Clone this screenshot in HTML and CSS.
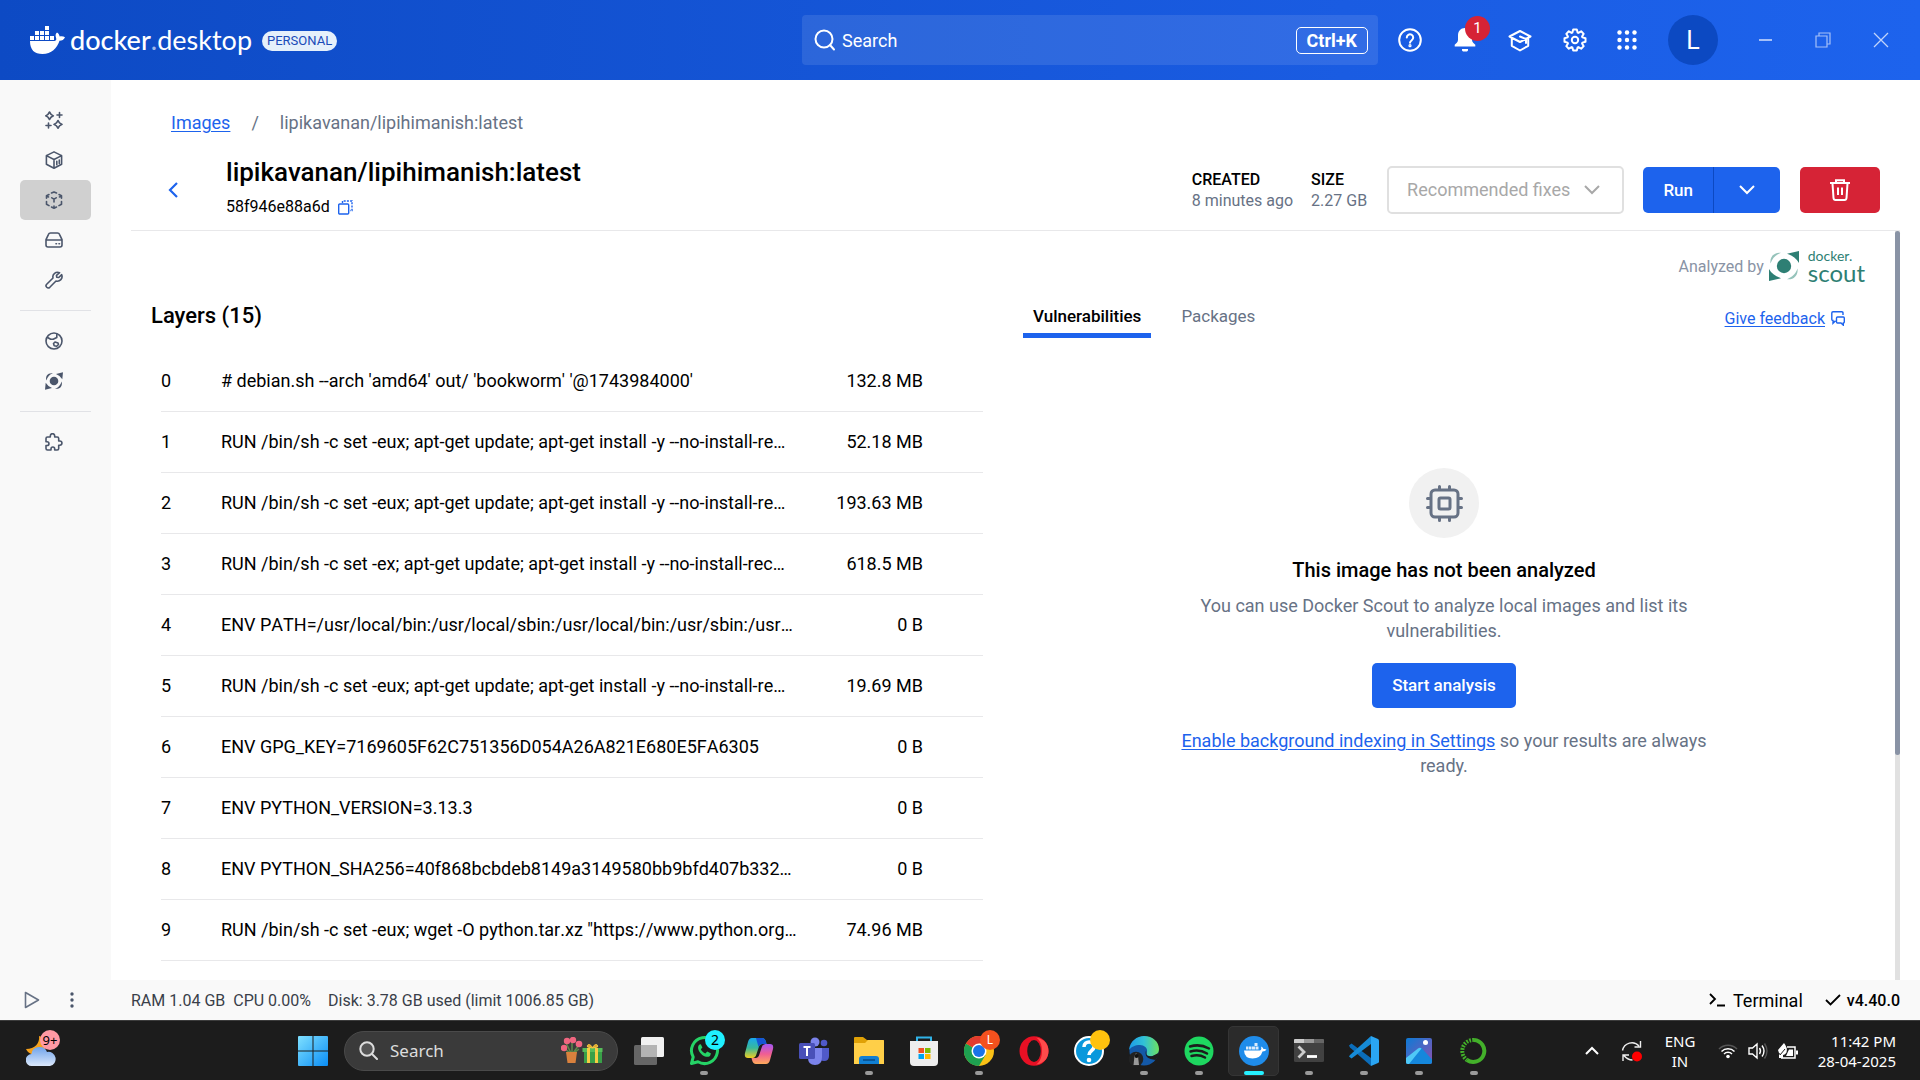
FILE: index.html
```html
<!DOCTYPE html>
<html lang="en">
<head>
    <meta charset="UTF-8">
    <meta name="viewport" content="width=device-width, initial-scale=1.0">
    <title>Docker Desktop</title>
    <link rel="stylesheet" href="styles.css">
</head>
<body>
    <header class="topbar">
        <div class="brand">
            <svg class="whale" viewBox="0 0 35 28" fill="#fff"><path d="M15 0h4v4h-4zM5 5h4v4H5zM10 5h4v4h-4zM15 5h4v4h-4zM0 10h4v4H0zM5 10h4v4H5zM10 10h4v4h-4zM15 10h4v4h-4zM20 10h4v4h-4z"/><path d="M0 15H24.500C27 14.500 26.300 12.500 25.700 10.500C25.300 8.600 26 7.300 27 6.500C28.600 7.500 29.400 9 29.700 10.600C31.400 10 33.600 10.400 35 11.200C34 13.500 32 14.800 29.500 14.800C27 22.500 21.500 28 12.500 28C4.500 28 0 24 0 15Z"/></svg>
            <span class="wordmark"><b>docker</b><i>.</i>desktop</span>
            <span class="plan">PERSONAL</span>
        </div>
        <label class="search">
            <svg width="22" height="22" viewBox="0 0 22 22" fill="none" stroke="#fff" stroke-width="2" stroke-linecap="round"><circle cx="10" cy="10" r="8.500"/><path d="M16 16l4 4.500"/></svg>
            <input type="text" placeholder="Search" aria-label="Search">
            <kbd>Ctrl+K</kbd>
        </label>
        <div class="actions">
            <button class="icon-btn" aria-label="Help">
                <svg width="24" height="24" viewBox="0 0 24 24" fill="none" stroke="#fff" stroke-width="2"><circle cx="12" cy="12" r="10.800"/><path d="M8.800 9.600a3.200 3.200 0 1 1 5 2.600c-1.200.9-1.800 1.400-1.800 2.600" stroke-linecap="round"/><circle cx="12" cy="17.700" r=".6"/></svg>
            </button>
            <button class="icon-btn" aria-label="Notifications">
                <svg width="24" height="24" viewBox="0 0 24 24" fill="#fff"><path d="M12 0c-4.500 0-7 3.300-7 7.500V12c0 2-2 3.500-3.300 4.700V18.500H22.300V16.700C21 15.500 19 14 19 12V7.500C19 3.300 16.500 0 12 0ZM9 21h6v1.500l-1 1h-4l-1-1z"/></svg>
                <span class="count">1</span>
            </button>
            <button class="icon-btn" aria-label="Learning center">
                <svg width="24" height="24" viewBox="0 0 24 24" fill="none" stroke="#fff" stroke-width="2" stroke-linejoin="round" stroke-linecap="round"><path d="M1.500 8.500L12 3l10.500 5.500L12 14zM3.800 10.500v7.300L12 22.500l8.200-4.700v-7.300M12 8.500l6 2.500v4"/></svg>
            </button>
            <button class="icon-btn" aria-label="Settings">
                <svg width="24" height="24" viewBox="-12 -12 24 24" fill="none" stroke="#fff" stroke-width="2" stroke-linejoin="round"><path d="M-1.800-10.500H1.800L2.600-7.400 3.390-7.070 6.150-8.700 8.700-6.150 7.070-3.390 7.400-2.600 10.500-1.800V1.800L7.400 2.600 7.070 3.390 8.700 6.150 6.150 8.700 3.390 7.070 2.600 7.400 1.800 10.500H-1.800L-2.600 7.400-3.390 7.070-6.150 8.700-8.700 6.150-7.070 3.390-7.400 2.600-10.500 1.800V-1.800L-7.400-2.600-7.070-3.390-8.700-6.150-6.150-8.700-3.390-7.070-2.600-7.400Z"/><circle r="3.200"/></svg>
            </button>
            <button class="icon-btn narrow" aria-label="Apps">
                <svg width="20" height="20" viewBox="0 0 20 20" fill="#fff"><circle cx="2.500" cy="2.500" r="2.200"/><circle cx="10" cy="2.500" r="2.200"/><circle cx="17.500" cy="2.500" r="2.200"/><circle cx="2.500" cy="10" r="2.200"/><circle cx="10" cy="10" r="2.200"/><circle cx="17.500" cy="10" r="2.200"/><circle cx="2.500" cy="17.500" r="2.200"/><circle cx="10" cy="17.500" r="2.200"/><circle cx="17.500" cy="17.500" r="2.200"/></svg>
            </button>
            <button class="avatar" aria-label="Account">L</button>
            <button class="win-btn" aria-label="Minimize"><svg width="14" height="14" viewBox="0 0 14 14" stroke="#a5c0f8" stroke-width="2"><path d="M1 7h13"/></svg></button>
            <button class="win-btn" aria-label="Restore"><svg width="16" height="16" viewBox="0 0 16 16" fill="none" stroke="#a5c0f8" stroke-width="1.200"><path d="M1 4h11v11H1zM4 4V1h11v11h-3"/></svg></button>
            <button class="win-btn" aria-label="Close"><svg width="16" height="16" viewBox="0 0 16 16" stroke="#c2d4fa" stroke-width="1.300"><path d="M1 1l14 14M15 1L1 15"/></svg></button>
        </div>
    </header>

    <div class="workspace">
        <nav class="sidebar">
            <a href="#" class="nav-item" aria-label="Ask Gordon"><svg viewBox="0 0 18 18"><path d="M4.500 1L6 3.300 8.300 4.800 6 6.200 4.500 8.500 3 6.200.8 4.800 3 3.300zM13 9.500l1.500 2.400 2.500 1.500-2.500 1.500L13 17.200l-1.500-2.300L9 13.400l2.500-1.500zM14.500 1.500v5M12 4h5M3.500 12v5M1 14.500h5"/></svg></a>
            <a href="#" class="nav-item" aria-label="Containers"><svg viewBox="0 0 18 18"><path d="M9 .9l7.600 3.700v8.700L9 17.200 1.400 13.300V4.600zM1.400 4.600L9 8.500l7.600-3.900M9 8.500v8.700M11.800 10.300v3.500M14.300 9v3.500"/></svg></a>
            <a href="#" class="nav-item selected" aria-label="Images"><svg viewBox="0 0 18 18"><path d="M6.500 2L9 .9 11.500 2M14 3.500l2.500 1.300v2.500M16.500 10.500v2.700L14 14.600M11.500 16L9 17.200 6.500 16M4 14.600l-2.500-1.400v-2.700M1.500 7.300V4.800L4 3.500M6.800 6.800L9 8.200l2.200-1.400M9 8.200V11M1.500 5l2 1M16.500 5l-2 1M9 15v2"/></svg></a>
            <a href="#" class="nav-item" aria-label="Volumes"><svg viewBox="0 0 18 18"><path d="M1 8.700L3.500 3.300Q4 2 5.500 2h7Q14 2 14.500 3.300L17 8.700V14q0 2-2 2H3q-2 0-2-2zM1 9h16M11 12.700h.5M14 12.700h.5"/></svg></a>
            <a href="#" class="nav-item" aria-label="Builds"><svg viewBox="0 0 18 18"><path d="M14.600 1.700C11 .2 7 3 8 7L1.700 13.200c-2 2.200 1 5 3.100 3.100L11 10c3.800 1 7.200-2.500 5.700-6.300L13.800 6.500 11.700 6.200 11.500 4.300z"/></svg></a>
            <hr>
            <a href="#" class="nav-item" aria-label="Docker Hub"><svg viewBox="0 0 18 18"><circle cx="9" cy="9" r="8"/><path d="M2.500 5.500l3.200 1.800h2.500L11.800 5.500V2.500M8.500 11.500l1.500-1.500 3 1 .5 1.500-1.800 1.800-2.500-.5z"/></svg></a>
            <a href="#" class="nav-item" aria-label="Docker Scout"><svg viewBox="0 0 18 18"><g fill="#4b566b" stroke="none"><circle cx="9" cy="9" r="4.300"/><path d="M18 .3L17.300 7.300Q15 3.500 11 2zM0 17.700L.7 10.700Q3 14.500 7 16zM1.300 8.500C.3 3.500 3 .5 8 1.300 4.500 2.500 3 4.500 1.300 8.500zM16.700 9.500c1 5-1.700 8-6.700 7.200 3.500-1.200 5-3.200 6.700-7.200z"/></g></svg></a>
            <hr>
            <a href="#" class="nav-item" aria-label="Extensions"><svg viewBox="0 0 18 18"><path d="M1 5.500Q1 4 2.500 4H5.300V3C5.300-.1 9.700-.1 9.700 3v1h2.500q1.500 0 1.500 1.500V8h1c3 0 3 4.200 0 4.200h-1v3.300q0 1.500-1.500 1.500H9.700v-1c0-2.600-3.700-2.600-3.700 0v1H2.500Q1 17 1 15.500v-3h1c2.600 0 2.600-3.700 0-3.700H1z"/></svg></a>
        </nav>

        <main class="page">
            <div class="crumbs">
                <a href="#">Images</a><span>/</span><span>lipikavanan/lipihimanish:latest</span>
            </div>
            <div class="image-head">
                <button class="back" aria-label="Back"><svg width="10" height="16" viewBox="0 0 10 16" fill="none" stroke="#1d63ed" stroke-width="2.200"><path d="M9 1L2 8l7 7"/></svg></button>
                <div class="image-name">
                    <h1>lipikavanan/lipihimanish:latest</h1>
                    <div class="image-id">58f946e88a6d
                        <button aria-label="Copy id"><svg width="15" height="15" viewBox="0 0 15 15" fill="none" stroke="#1d63ed" stroke-width="1.400"><rect x=".7" y="4" width="10" height="10" rx="1"/><path d="M4.500 3V1H14v9.500h-2" stroke-dasharray="2 1.200"/></svg></button>
                    </div>
                </div>
                <dl class="meta">
                    <div><dt>CREATED</dt><dd>8 minutes ago</dd></div>
                    <div><dt>SIZE</dt><dd>2.27 GB</dd></div>
                </dl>
                <button class="btn fixes" disabled>Recommended fixes
                    <svg width="16" height="10" viewBox="0 0 16 10" fill="none" stroke="#a8a8a8" stroke-width="2"><path d="M1 1l7 7 7-7"/></svg>
                </button>
                <div class="run-group">
                    <button class="btn run">Run</button>
                    <button class="btn run-more" aria-label="Run options"><svg width="16" height="10" viewBox="0 0 16 10" fill="none" stroke="#fff" stroke-width="2"><path d="M1 1l7 7 7-7"/></svg></button>
                </div>
                <button class="btn delete" aria-label="Delete image">
                    <svg width="22" height="22" viewBox="0 0 22 22" fill="none" stroke="#fff" stroke-width="2"><path d="M1 4h20M7 3.500V1.200h8v2.300M3.500 4.500l1 14.500q.2 2 2 2h9q1.800 0 2-2l1-14.500M9 8.500V16M13 8.500V16"/></svg>
                </button>
            </div>

            <div class="scroll-area">
                <div class="scroll-body">
                    <div class="scout">
                        <span>Analyzed by</span>
                        <svg width="30" height="30" viewBox="0 0 30 30"><g fill="#2e7f74"><circle cx="15" cy="15" r="7.200"/><path d="M30 0v12C27.500 7.500 23.500 4.500 18 2.800zM0 30V18c2.500 4.500 6.500 7.500 12 9.200z"/></g><g fill="#96c3bb"><path d="M1.500 12.500C.5 5.500 5.500.8 12 1.800 6.500 4 3.500 7 1.500 12.500zM28.500 17.500C29.500 24.500 24.500 29.200 18 28.200 23.500 26 26.500 23 28.500 17.500z"/></g></svg>
                        <span class="scout-word"><small>docker.</small>scout</span>
                    </div>
                    <div class="columns">
                        <section class="layers">
                            <h2>Layers (15)</h2>
                            <table>
                                <tbody>
                                    <tr><td class="num">0</td><td># debian.sh --arch 'amd64' out/ 'bookworm' '@1743984000'</td><td class="size">132.8 MB</td></tr>
                                    <tr><td class="num">1</td><td>RUN /bin/sh -c set -eux; apt-get update; apt-get install -y --no-install-re…</td><td class="size">52.18 MB</td></tr>
                                    <tr><td class="num">2</td><td>RUN /bin/sh -c set -eux; apt-get update; apt-get install -y --no-install-re…</td><td class="size">193.63 MB</td></tr>
                                    <tr><td class="num">3</td><td>RUN /bin/sh -c set -ex; apt-get update; apt-get install -y --no-install-rec…</td><td class="size">618.5 MB</td></tr>
                                    <tr><td class="num">4</td><td>ENV PATH=/usr/local/bin:/usr/local/sbin:/usr/local/bin:/usr/sbin:/usr…</td><td class="size">0 B</td></tr>
                                    <tr><td class="num">5</td><td>RUN /bin/sh -c set -eux; apt-get update; apt-get install -y --no-install-re…</td><td class="size">19.69 MB</td></tr>
                                    <tr><td class="num">6</td><td>ENV GPG_KEY=7169605F62C751356D054A26A821E680E5FA6305</td><td class="size">0 B</td></tr>
                                    <tr><td class="num">7</td><td>ENV PYTHON_VERSION=3.13.3</td><td class="size">0 B</td></tr>
                                    <tr><td class="num">8</td><td>ENV PYTHON_SHA256=40f868bcbdeb8149a3149580bb9bfd407b332…</td><td class="size">0 B</td></tr>
                                    <tr><td class="num">9</td><td>RUN /bin/sh -c set -eux; wget -O python.tar.xz "https://www.python.org…</td><td class="size">74.96 MB</td></tr>
                                </tbody>
                            </table>
                        </section>
                        <section class="analysis">
                            <div class="tabs" role="tablist">
                                <button class="tab active" role="tab" aria-selected="true">Vulnerabilities</button>
                                <button class="tab" role="tab">Packages</button>
                                <a href="#" class="feedback">Give feedback</a>
                                <svg width="14" height="15" viewBox="0 0 14 15" fill="none" stroke="#1d63ed" stroke-width="1.400"><path d="M12 4V2q0-1.200-1.200-1.200H2Q.8.800.8 2v6.500q0 1 1.200 1v2.800L4.500 9.700M6.500 6h5.800q1 0 1 1v4q0 1-1 1v2.200L10 12H6.500q-1 0-1-1V7q0-1 1-1z"/></svg>
                            </div>
                            <div class="empty">
                                <div class="chip">
                                    <svg width="37" height="37" viewBox="0 0 37 37" fill="none" stroke="#677285" stroke-width="3" stroke-linecap="round"><rect x="5" y="5" width="27" height="27" rx="4"/><rect x="13" y="13" width="11" height="11" rx="1.500"/><path d="M13.500 1.500v3M23.500 1.500v3M13.500 32.500v3M23.500 32.500v3M1.500 13.500h3M1.500 22.500h3M32.500 13.500h3M32.500 22.500h3"/></svg>
                                </div>
                                <h3>This image has not been analyzed</h3>
                                <p>You can use Docker Scout to analyze local images and list its vulnerabilities.</p>
                                <button class="btn primary">Start analysis</button>
                                <p><a href="#">Enable background indexing in Settings</a> so your results are always ready.</p>
                            </div>
                        </section>
                    </div>
                </div>
                <div class="scrollbar"><div class="thumb"></div></div>
            </div>
        </main>
    </div>

    <footer class="statusbar">
        <button class="engine" aria-label="Start"><svg width="16" height="18" viewBox="0 0 16 18" fill="none" stroke="#677285" stroke-width="1.600" stroke-linejoin="round"><path d="M1.500 1.500v15L14.500 9z"/></svg></button>
        <button class="engine" aria-label="More"><svg width="4" height="16" viewBox="0 0 4 16" fill="#4b566b"><circle cx="2" cy="2" r="1.700"/><circle cx="2" cy="8" r="1.700"/><circle cx="2" cy="14" r="1.700"/></svg></button>
        <span class="usage">RAM 1.04 GB</span>
        <span class="usage">CPU 0.00%</span>
        <span class="usage disk">Disk: 3.78 GB used (limit 1006.85 GB)</span>
        <button class="terminal"><svg width="16" height="14" viewBox="0 0 16 14" fill="none" stroke="#000" stroke-width="1.800"><path d="M1 1l5 5-5 5M8 12.500h8"/></svg>Terminal</button>
        <span class="version"><svg width="16" height="12" viewBox="0 0 16 12" fill="none" stroke="#000" stroke-width="1.800"><path d="M1 6l4.500 4.500L15 1"/></svg>v4.40.0</span>
    </footer>

    <div class="taskbar">
        <button class="weather" aria-label="Weather">
            <svg width="30" height="30" viewBox="0 0 30 30"><defs><linearGradient id="cloud" x2="0" y2="1"><stop stop-color="#6fa3ea"/><stop offset="1" stop-color="#dbe8fb"/></linearGradient></defs><path d="M13 0c1 7-4 13-13 13 3 7 14 8 19 1V2z" fill="#f5a11c"/><path d="M6 30a6 6 0 0 1-.5-12 8 7.500 0 0 1 15.500-2 7 7 0 0 1 3 14z" fill="url(#cloud)"/></svg>
            <span>9+</span>
        </button>
        <button class="app" aria-label="Start"><svg width="30" height="30" viewBox="0 0 30 30"><defs><linearGradient id="win" x2="1" y2="1"><stop stop-color="#7fe0ff"/><stop offset="1" stop-color="#0a8df5"/></linearGradient></defs><path d="M1 0h13.500v14.500H0V1q0-1 1-1zM15.500 0H29q1 0 1 1v13.500H15.500zM0 15.500h14.500V30H1q-1 0-1-1zM15.500 15.500H30V29q0 1-1 1H15.500z" fill="url(#win)"/></svg></button>
        <label class="task-search">
            <svg width="19" height="19" viewBox="0 0 19 19" fill="#555" stroke="#ddd" stroke-width="2" stroke-linecap="round"><circle cx="8" cy="8" r="6.700"/><path d="M13 13l5 5"/></svg>
            <input type="text" placeholder="Search" aria-label="Search Windows">
            <svg width="42" height="27" viewBox="0 0 42 27"><path d="M10 16L5 6M11 16L11 5M12 16L18 8M9 16L3 11M13 16l5-4" stroke="#5e8b4a" stroke-width="1.500"/><g fill="#f06680"><circle cx="6" cy="4" r="3.200"/><circle cx="12" cy="3" r="3.200"/><circle cx="3" cy="11" r="3.200"/><circle cx="18" cy="7" r="3.300"/></g><path d="M5 15h11l-1.500 11h-8z" fill="#d9813d"/><path d="M23 14h18v12H23z" fill="#39a048"/><path d="M21.500 11h20v4h-20z" fill="#55bd59"/><path d="M26 11h3v15h-3zM34 11h3v15h-3z" fill="#f6cd45"/><path d="M31.500 11c-2-5-6-4-5-1zM31.500 11c2-5 6-4 5-1z" fill="#e6a72c" stroke="#f6cd45"/></svg>
        </label>
        <button class="app" aria-label="Task view"><svg width="30" height="30" viewBox="0 0 30 30"><rect y="9" width="23" height="20" rx="1.500" fill="#666"/><rect x="7" y="1" width="23" height="20" rx="1.500" fill="#f1f1f1"/><path d="M7 9h16v12H7z" fill="#b4b4b4"/></svg></button>
        <button class="app open" aria-label="WhatsApp"><svg width="32" height="32" viewBox="0 0 32 32"><path d="M3.500 28.500L5.200 22A13 13 0 1 1 10 26.800z" fill="none" stroke="#25d366" stroke-width="3" stroke-linejoin="round"/><path d="M11.500 9.500c-5 4 4.500 15.500 10.500 11.500l1-2.500-3.700-2-2 2c-2-.7-3.500-2.200-4.400-4.200l1.500-1.800L12.800 9.300z" fill="#25d366"/></svg><span class="badge cyan">2</span></button>
        <button class="app" aria-label="Copilot"><svg width="30" height="30" viewBox="0 0 30 30"><defs><linearGradient id="cpa" x2="0" y2="1"><stop stop-color="#18a8ef"/><stop offset=".5" stop-color="#38b89a"/><stop offset="1" stop-color="#f1ce20"/></linearGradient><linearGradient id="cpb" x2="0" y2="1"><stop stop-color="#a456f5"/><stop offset=".5" stop-color="#f05e93"/><stop offset="1" stop-color="#ffab5b"/></linearGradient></defs><path d="M8 2h10q3 0 4 4l.5 2h-4q-3 0-4 4l-2 6q-1 4-4 4H4q-4 0-3-5L4 6q1-4 4-4z" fill="url(#cpa)"/><path d="M12 2h6q3 0 4 4l.5 2h-4q-3 0-4 3z" fill="#1555d4"/><path d="M22 28H12q-3 0-4-4l-.5-2h4q3 0 4-4l2-6q1-4 4-4H26q4 0 3 5l-3 11q-1 4-4 4z" fill="url(#cpb)"/></svg></button>
        <button class="app" aria-label="Teams"><svg width="30" height="30" viewBox="0 0 30 30"><circle cx="25" cy="7" r="3.300" fill="#5059c9"/><circle cx="16" cy="6" r="4.500" fill="#7b83eb"/><path d="M20 12h10v8q0 5-5 5-4 0-5-3z" fill="#5059c9"/><path d="M9 12h14v9q0 8-7 8t-7-7z" fill="#7b83eb"/><rect y="7" width="16" height="16" rx="1.500" fill="#4950b8"/><path d="M4.500 11h7M8 11v9" stroke="#fff" stroke-width="2"/></svg></button>
        <button class="app open" aria-label="File Explorer"><svg width="30" height="28" viewBox="0 0 30 28"><path d="M0 1q0-1 1-1h8l4 3h16q1 0 1 1v8H0z" fill="#e0a106"/><path d="M0 6h11l3-3h15q1 0 1 1v23H0z" fill="#ffcf48"/><path d="M5 27v-5q0-3 3-3h14q3 0 3 3v5z" fill="#117fd2"/><path d="M9 23h12" stroke="#064a86" stroke-width="1.500"/></svg></button>
        <button class="app" aria-label="Microsoft Store"><svg width="30" height="30" viewBox="0 0 30 30"><path d="M8 7V1.500h14V7" fill="none" stroke="#30b3e8" stroke-width="2"/><path d="M1 5h28v21q0 4-4 4H5q-4 0-4-4z" fill="#eee"/><path d="M9.500 12H15v5H9.500z" fill="#f25022"/><path d="M16 12h5.500v5H16z" fill="#7fba00"/><path d="M9.500 18H15v5H9.500z" fill="#00a4ef"/><path d="M16 18h5.500v5H16z" fill="#ffb900"/></svg></button>
        <button class="app open" aria-label="Chrome"><svg width="30" height="30" viewBox="0 0 30 30"><circle cx="15" cy="15" r="15" fill="#fbc116"/><path d="M15 15L2 7.500A15 15 0 0 0 15 30l6.500-11z" fill="#1ea150"/><path d="M15 15L2 7.500A15 15 0 0 1 28 7.500H15z" fill="#e33b2e"/><circle cx="15" cy="15" r="7.500" fill="#fff"/><circle cx="15" cy="15" r="6" fill="#1a73e8"/></svg><span class="badge orange">L</span></button>
        <button class="app" aria-label="Opera"><svg width="30" height="30" viewBox="0 0 30 30"><ellipse cx="15" cy="15" rx="14.500" ry="14.700" fill="#e81024"/><path d="M17 1.500C26 3 29.500 9 29.500 15S26 27.500 17 28.500C25 24 25 6 17 1.500z" fill="#ff4b4b"/><ellipse cx="15" cy="15" rx="6.800" ry="11" fill="#1c1c1c"/></svg></button>
        <button class="app" aria-label="Get Help"><svg width="30" height="30" viewBox="0 0 30 30"><circle cx="15" cy="15" r="14" fill="#0a98dc" stroke="#fff" stroke-width="2"/><path d="M10 11c0-7 10.500-6.500 10 0-.3 3.500-5 4-5 8" fill="none" stroke="#fff" stroke-width="3.500"/><circle cx="15" cy="24" r="2.300" fill="#fff"/></svg><span class="badge yellow"></span></button>
        <button class="app open" aria-label="Edge"><svg width="30" height="30" viewBox="0 0 30 30"><defs><linearGradient id="edge"><stop stop-color="#1d9be8"/><stop offset=".5" stop-color="#31c1d6"/><stop offset="1" stop-color="#6de05f"/></linearGradient></defs><circle cx="15" cy="15" r="14.500" fill="#1459a8"/><path d="M0 14C1 5 8 0 15 0c9 0 15 6 15 13 0 5-4 7-8 7-5 0-5-2-4-4 1-4-3-7-7-7-5 0-9 2-11 5z" fill="url(#edge)"/><path d="M17.500 13c-1 2 0 3.500 0 5 0 2 3 2.500 6 2l6-3v3l-3 4c-7-1-12-3-9-11z" fill="#1c1c1c"/><circle cx="7" cy="23" r="7.300" fill="#222"/><path d="M4.500 29l1-9 1.500-3 2 3 1 9z" fill="#999"/><circle cx="7.500" cy="20" r="2" fill="#111"/></svg></button>
        <button class="app open" aria-label="Spotify"><svg width="30" height="30" viewBox="0 0 30 30"><circle cx="15" cy="15" r="14.500" fill="#1ed760"/><path d="M6 10.500q10-3 19 2M6.500 15.500q9-2.500 16.500 2M7.500 20q7.500-2 13.500 1.500" fill="none" stroke="#1c1c1c" stroke-width="2.500" stroke-linecap="round"/></svg></button>
        <button class="app open current" aria-label="Docker Desktop"><svg width="30" height="30" viewBox="0 0 30 30"><circle cx="15" cy="15" r="15" fill="#1f8cea"/><path d="M9.500 10.500h3v3h-3zM13 10.500h3v3h-3zM16.500 10.500h3v3h-3zM15.500 7h3v3h-3zM7 10.500h2v3H7z" fill="#dcecfb"/><path d="M5 14.500h16q2-1 1-4 2 .5 2.500 2.500 2-.2 3 .5-1 2-4 2-2 7-10 7-8 0-8.500-8z" fill="#fff"/></svg></button>
        <button class="app open" aria-label="Terminal"><svg width="30" height="24" viewBox="0 0 30 24"><rect width="30" height="23" rx="1.500" fill="#414141"/><path d="M0 4V1q0-1 1-1h9v4z" fill="#ccc"/><path d="M10 0h10v4H10z" fill="#999"/><path d="M20 0h9q1 0 1 1v3H20z" fill="#666"/><path d="M4.500 7.500l5.500 5.500-5.500 5.500" stroke="#ccc" stroke-width="2.800" fill="none"/><path d="M13 17.500h10" stroke="#fff" stroke-width="2.800"/></svg></button>
        <button class="app open" aria-label="VS Code"><svg width="30" height="30" viewBox="0 0 30 30"><path d="M0 9.500L2.500 7.500 22 22v8L1 11.500z" fill="#0b6dba"/><path d="M0 20.500l2.500 2L22 8V0L1 19z" fill="#168bd7"/><path d="M22 0l7 3q1 .5 1 1.500v21q0 1-1 1.500l-7 3z" fill="#2aa5f2"/></svg></button>
        <button class="app open" aria-label="Photos"><svg width="26" height="26" viewBox="0 0 26 26"><defs><linearGradient id="ph" x2="1" y2="1"><stop stop-color="#0c7bd6"/><stop offset="1" stop-color="#8d50b0"/></linearGradient></defs><rect width="26" height="26" rx="2" fill="url(#ph)"/><path d="M0 24L13 10.500q1.500-1.500 3 0l10 11V24q0 2-2 2H2q-2 0-2-2z" fill="#1587dc"/><path d="M0 20l12-9.500q2-1.500 3.500 0L3 26H2q-2 0-2-2z" fill="#4fc9f7"/><circle cx="19.500" cy="4.500" r="2.500" fill="#fff"/></svg></button>
        <button class="app open" aria-label="Anaconda"><svg width="28" height="28" viewBox="0 0 28 28" fill="none" stroke="#43b02a" stroke-width="4"><path d="M14 3a11 11 0 1 1-7 20"/><path d="M14 3A11 11 0 0 0 7 23" stroke-dasharray="1.800 1.200"/></svg></button>

        <div class="tray">
            <button class="tray-btn" aria-label="Hidden icons"><svg width="14" height="9" viewBox="0 0 14 9" fill="none" stroke="#fff" stroke-width="2"><path d="M1 8l6-6 6 6"/></svg></button>
            <button class="tray-btn" aria-label="Updates"><svg width="22" height="22" viewBox="0 0 22 22" fill="none" stroke="#eee" stroke-width="1.400"><path d="M1.500 10.500A9.500 9.500 0 0 1 18 6M19.500 1v6h-6M2 21v-6h6M2.500 15q4 5 9 5"/><circle cx="16" cy="16.500" r="5" fill="#f00" stroke="none"/></svg></button>
            <span class="lang">ENG<br>IN</span>
            <button class="tray-btn net" aria-label="Network and sound">
                <svg width="20" height="16" viewBox="0 0 20 16" fill="none" stroke-width="1.500"><path d="M1 6a12.500 12.500 0 0 1 18 0" stroke="#555"/><path d="M3.500 8.500a9.200 9.200 0 0 1 13 0M6 11a5.700 5.700 0 0 1 8 0" stroke="#fff"/><circle cx="10" cy="13.500" r="1.800" fill="#fff"/></svg>
                <svg width="20" height="18" viewBox="0 0 20 18" fill="none" stroke="#fff" stroke-width="1.400"><path d="M1 6h3.500L9 2v14l-4.500-4H1zM11.500 6q2 3 0 6M14 3.500q4 5.500 0 11"/><path d="M16.500 1.500q5 7.500 0 15" stroke="#555"/></svg>
                <svg width="20" height="18" viewBox="0 0 20 18"><path d="M9 5h8v11H3" fill="none" stroke="#fff" stroke-width="1.500"/><path d="M11 7.500h4v6.500H8zM18 8.500h2v4h-2zM0 8l6-7q4 5 2.500 9.500Q6 15 1 11zM1 13l4-4v7H1z" fill="#fff"/><path d="M2 13l5-6" stroke="#1c1c1c"/></svg>
            </button>
            <span class="clock">11:42 PM<br>28-04-2025</span>
        </div>
    </div>
</body>
</html>
```

FILE: styles.css
```css
* {
    box-sizing: border-box;
}
body {
    margin: 0;
    height: 100vh;
    display: flex;
    flex-direction: column;
    overflow: hidden;
    font-family: Roboto, sans-serif;
    font-size: 18px;
    color: #000;
    background-color: #fff;
}
button,
input {
    font: inherit;
    color: inherit;
    border: none;
    background: none;
    padding: 0;
}
button {
    cursor: pointer;
}
a {
    color: #1d63ed;
    text-underline-offset: 2px;
}
svg {
    display: block;
    flex: none;
}
h1, h2, h3, p, dl, dd {
    margin: 0;
}

/* top bar */
.topbar {
    flex: none;
    height: 80px;
    display: flex;
    align-items: center;
    padding: 0 10px 0 30px;
    background: linear-gradient(90deg, #0d4ac4, #1a5ce2 70%, #1d63ed);
    color: #fff;
}
.brand {
    flex: 1;
    display: flex;
    align-items: center;
}
.whale {
    width: 35px;
    height: 28px;
}
.wordmark {
    margin-left: 5px;
    font: 400 27px/36px Lato, sans-serif;
}
.wordmark b {
    font-weight: 500;
}
.wordmark i {
    font-style: normal;
    opacity: 0.6;
}
.plan {
    margin-left: 10px;
    margin-top: 2px;
    height: 20px;
    padding: 0 5px;
    border-radius: 10px;
    font-size: 13px;
    font-weight: 400;
    line-height: 20px;
    color: #1a4bb8;
    background-color: #e5f0fb;
}
.search {
    flex: 0 1 576px;
    height: 50px;
    display: flex;
    align-items: center;
    gap: 6px;
    padding: 0 10px 0 12px;
    border-radius: 4px;
    background-color: rgba(255, 255, 255, 0.1);
}
.search input {
    flex: 1;
    min-width: 0;
}
.search input::placeholder,
.task-search input::placeholder {
    color: inherit;
    opacity: 1;
}
.search kbd {
    height: 27px;
    padding: 0 10px;
    border: 1px solid #fff;
    border-radius: 5px;
    font: 700 18px/25px Roboto, sans-serif;
}
.actions {
    display: flex;
    align-items: center;
    margin-left: 4px;
}
.icon-btn {
    position: relative;
    width: 55px;
    height: 50px;
    display: flex;
    align-items: center;
    justify-content: center;
}
.icon-btn.narrow {
    width: 50px;
}
.count {
    position: absolute;
    top: 1px;
    right: 2px;
    width: 25px;
    height: 25px;
    border-radius: 50%;
    font-size: 15px;
    line-height: 25px;
    background-color: #d62336;
}
.avatar {
    width: 50px;
    height: 50px;
    margin: 0 18px 0 16px;
    border-radius: 50%;
    font-size: 25px;
    background-color: #0c49c2;
}
.win-btn {
    width: 58px;
    height: 50px;
    display: flex;
    align-items: center;
    justify-content: center;
}

/* sidebar */
.workspace {
    flex: 1;
    min-height: 0;
    display: flex;
}
.sidebar {
    flex: none;
    width: 111px;
    padding: 20px;
    background-color: #f9f9f9;
}
.nav-item {
    height: 40px;
    display: flex;
    align-items: center;
    padding-left: 25px;
    border-radius: 5px;
}
.nav-item.selected {
    background-color: #d0d0d0;
}
.nav-item svg {
    width: 18px;
    height: 18px;
    fill: none;
    stroke: #4b566b;
    stroke-width: 1.6;
    stroke-linecap: round;
    stroke-linejoin: round;
}
.sidebar hr {
    height: 1px;
    margin: 10px 0;
    border: none;
    background-color: #e1e2e6;
}

/* image page */
.page {
    flex: 1;
    min-width: 0;
    display: flex;
    flex-direction: column;
}
.crumbs {
    display: flex;
    gap: 21px;
    padding: 31px 60px 0;
    line-height: 24px;
    color: #677285;
}
.image-head {
    display: flex;
    align-items: center;
    height: 96px;
    margin: 0 20px;
    padding: 23px 20px 9px 37px;
    border-bottom: 1px solid #e8e8ea;
}
.back {
    display: flex;
    margin-right: 48px;
}
.image-name {
    flex: 1;
    padding-bottom: 5px;
}
h1 {
    font-size: 26px;
    font-weight: 500;
    line-height: 40px;
}
.image-id {
    display: flex;
    align-items: center;
    gap: 8px;
    font-size: 16px;
    line-height: 30px;
}
.meta {
    display: flex;
    gap: 18px;
    margin-right: 20px;
    font-size: 16px;
    line-height: 21px;
}
.meta dt {
    font-weight: 500;
}
.meta dd {
    color: #677285;
}
.btn {
    height: 46px;
    display: flex;
    align-items: center;
    justify-content: center;
    padding: 0 20px;
    border-radius: 5px;
    font-weight: 500;
}
.fixes {
    gap: 14px;
    height: 48px;
    border: 2px solid #e0e0e0;
    font-weight: 400;
    color: #a8a8a8;
    padding: 0 22px 0 18px;
}
.run-group {
    display: flex;
    margin: 0 20px 0 19px;
}
.run,
.run-more,
.primary {
    color: #fff;
    background-color: #1d63ed;
}
.run {
    border-right: 1px solid #0c49c2;
    border-radius: 5px 0 0 5px;
    font-size: 17px;
}
.run-more {
    width: 66px;
    border-radius: 0 5px 5px 0;
}
.delete {
    width: 80px;
    background-color: #d62336;
}
.scroll-area {
    flex: 1;
    min-height: 0;
    display: flex;
    padding-right: 20px;
}
.scroll-body {
    flex: 1;
    min-width: 0;
    overflow: hidden;
    padding: 16px 30px 0;
}
.scrollbar {
    width: 5px;
    background-color: #e1e1e1;
}
.thumb {
    height: 70%;
    border-radius: 3px;
    background-color: #8993a5;
}
.scout {
    display: flex;
    align-items: center;
    justify-content: flex-end;
    gap: 5px;
    height: 38px;
    font-size: 16px;
    color: #8993a5;
}
.scout-word {
    display: flex;
    flex-direction: column;
    margin-left: 4px;
    font: 400 24px/20px Lato, sans-serif;
    color: #2e7f74;
}
.scout-word small {
    font-size: 14px;
    line-height: 14px;
}
.columns {
    display: grid;
    grid-template-columns: 1fr 1fr;
    gap: 40px;
}

/* layers */
h2 {
    height: 65px;
    padding: 14px 10px;
    font-size: 22px;
    font-weight: 500;
    line-height: 34px;
}
.layers {
    min-width: 0;
}
.layers table {
    width: calc(100% - 20px);
    margin-left: 20px;
    table-layout: fixed;
    border-collapse: collapse;
    font-kerning: none;
}
.layers td {
    height: 61px;
    padding: 0;
    border-bottom: 1px solid #e8e8ea;
    white-space: nowrap;
    overflow: hidden;
}
.layers .num {
    width: 60px;
}
.layers .size {
    width: 180px;
    padding-right: 60px;
    text-align: right;
}

/* analysis */
.tabs {
    display: flex;
    align-items: center;
    height: 53px;
    padding-right: 20px;
}
.tab {
    height: 43px;
    align-self: flex-end;
    padding: 4px 10px 0;
    border-bottom: 5px solid transparent;
    margin-right: 20px;
    font-size: 17px;
    color: #677285;
}
.tab.active {
    border-color: #1d63ed;
    font-weight: 500;
    color: #000;
}
.feedback {
    margin: 14px 6px 0 auto;
    font-size: 16px;
}
.tabs svg {
    margin-top: 14px;
}
.empty {
    display: flex;
    flex-direction: column;
    align-items: center;
    max-width: 560px;
    margin: 0 auto;
    padding-top: 130px;
    text-align: center;
    line-height: 25px;
    color: #677285;
}
.chip {
    width: 70px;
    height: 70px;
    display: flex;
    align-items: center;
    justify-content: center;
    border-radius: 50%;
    background-color: #f1f1f1;
}
h3 {
    margin: 18px 0 9px;
    font-size: 20px;
    font-weight: 500;
    line-height: 28px;
    color: #000;
}
.primary {
    height: 45px;
    margin: 20px 0;
    font-size: 17px;
}

/* status bar */
.statusbar {
    flex: none;
    height: 40px;
    display: flex;
    align-items: center;
    padding: 0 20px 0 12px;
    font-size: 16px;
    background-color: #f9f9f9;
}
.engine {
    width: 40px;
    display: flex;
    justify-content: center;
}
.usage {
    margin-right: 8px;
    color: #393f49;
}
.engine + .usage {
    margin-left: 39px;
}
.disk {
    margin: 0 auto 0 9px;
}
.terminal {
    display: flex;
    align-items: center;
    gap: 8px;
    font-size: 18px;
}
.version {
    display: flex;
    align-items: center;
    gap: 6px;
    margin-left: 22px;
    font-weight: 500;
}

/* taskbar */
.taskbar {
    flex: none;
    height: 60px;
    display: flex;
    align-items: center;
    border-top: 1px solid #3c3c3c;
    font-family: "Noto Sans", sans-serif;
    color: #fff;
    background-color: #1c1c1c;
}
.weather {
    position: relative;
    width: 30px;
    margin: 0 229px 0 26px;
}
.weather span {
    position: absolute;
    top: -6px;
    right: -4px;
    width: 20px;
    height: 20px;
    border-radius: 50%;
    font-size: 13px;
    line-height: 20px;
    color: #000;
    background-color: #ff99a4;
}
.app {
    position: relative;
    flex: none;
    width: 55px;
    height: 60px;
    display: flex;
    align-items: center;
    justify-content: center;
}
.app svg {
    position: relative;
}
.app.open::after {
    content: "";
    position: absolute;
    bottom: 6px;
    width: 8px;
    height: 4px;
    border-radius: 2px;
    background-color: #9a9a9a;
}
.app.current::before {
    content: "";
    position: absolute;
    inset: 5px 2px;
    border: 1px solid #353535;
    border-radius: 5px;
    background-color: #2b2b2b;
}
.app.current::after {
    width: 20px;
    background-color: #26f0ff;
}
.badge {
    position: absolute;
    top: 9px;
    right: 6px;
    width: 20px;
    height: 20px;
    border-radius: 50%;
    font-size: 14px;
    line-height: 20px;
}
.cyan {
    color: #000;
    background-color: #1ff1ff;
}
.orange {
    font-size: 12px;
    background-color: #f4511e;
}
.yellow {
    background-color: #ffc20e;
}
.task-search {
    width: 274px;
    height: 40px;
    display: flex;
    align-items: center;
    gap: 12px;
    margin: 0 3px 0 4px;
    padding: 0 14px;
    border: 1px solid #4a4a4a;
    border-radius: 20px;
    background-color: #3a3a3a;
    color: #ddd;
    font-size: 17px;
}
.task-search input {
    flex: 1;
    min-width: 0;
}
.tray {
    display: flex;
    align-items: center;
    margin-left: auto;
    padding-right: 24px;
    font-size: 15px;
    line-height: 20px;
}
.tray-btn {
    width: 40px;
    display: flex;
    align-items: center;
    justify-content: center;
}
.lang {
    width: 56px;
    text-align: center;
}
.net {
    width: 100px;
    gap: 10px;
}
.clock {
    width: 88px;
    text-align: right;
}
```
